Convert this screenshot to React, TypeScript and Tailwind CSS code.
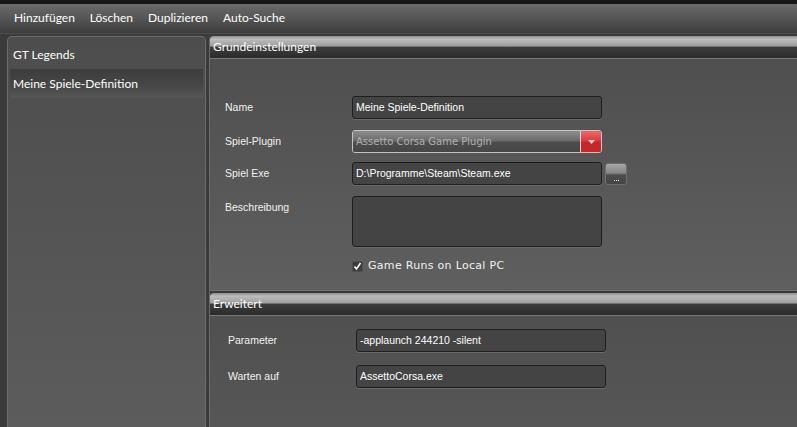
import React from "react";

const menuItems = ["Hinzufügen", "Löschen", "Duplizieren", "Auto-Suche"];
const games = ["GT Legends", "Meine Spiele-Definition"];

function SectionHeader({ title }: { title: string }) {
    return (
        <div className="h-[23px] shrink-0 flex items-center pl-[3px] rounded-tl-[4px] border-b border-[#7a7a7a] bg-[linear-gradient(to_bottom,#8c8c8c_0%,#bcbcbc_14%,#9e9e9e_46%,#3d3d3d_50%,#2b2b2b_100%)] text-white text-[12px] font-['Lato','Liberation_Sans',sans-serif]">
            {title}
        </div>
    );
}

function TextBox({ value, tall }: { value?: string; tall?: boolean }) {
    return (
        <div
            className={`w-[250px] ${tall ? "h-[51px] items-start pt-[4px]" : "h-[23px] items-center"} flex px-[3px] rounded-[3px] border border-[#1f1f1f] bg-[#444444] shadow-[0_1px_0_#6a6a6a] text-white text-[10.5px] font-['Liberation_Sans',Arial,sans-serif]`}
        >
            {value}
        </div>
    );
}

function Row({
    label,
    children,
    labelWidth,
}: {
    label: string;
    children: React.ReactNode;
    labelWidth: string;
}) {
    return (
        <div className="flex items-start">
            <div
                className={`${labelWidth} h-[23px] flex items-center text-[#f2f2f2] text-[10.5px] font-['Liberation_Sans',Arial,sans-serif]`}
            >
                {label}
            </div>
            {children}
        </div>
    );
}

function PluginSelect() {
    return (
        <div className="w-[250px] h-[23px] flex rounded-[3px] border border-[#c4c4c4] overflow-hidden">
            <div className="flex-1 flex items-center pl-[3px] bg-[linear-gradient(to_bottom,#8e8e8e_0%,#6c6c6c_45%,#4c4c4c_55%,#474747_100%)] text-[#b0b0b0] text-[10px] font-['DejaVu_Sans',Verdana,sans-serif]">
                Assetto Corsa Game Plugin
            </div>
            <div className="w-[21px] flex items-center justify-center border-l border-[#d8d8d8] bg-[linear-gradient(to_bottom,#ee6a6a_0%,#de3b3b_45%,#c92626_55%,#c42828_100%)]">
                <svg width="7" height="4" viewBox="0 0 7 4">
                    <path d="M0 0 H7 L3.5 4 Z" fill="#f4dede" />
                </svg>
            </div>
        </div>
    );
}

function BrowseButton() {
    return (
        <div className="ml-[3px] w-[22px] h-[22px] mt-[1px] flex items-end justify-center pb-[3px] rounded-[3px] border border-[#6e6e6e] bg-[linear-gradient(to_bottom,#a6a6a6_0%,#868686_45%,#4d4d4d_55%,#444444_100%)]">
            <div className="flex gap-[1px]">
                <span className="w-[1px] h-[1px] bg-white" />
                <span className="w-[1px] h-[1px] bg-white" />
                <span className="w-[1px] h-[1px] bg-white" />
            </div>
        </div>
    );
}

export default function App() {
    return (
        <div className="w-[797px] h-[427px] overflow-hidden flex flex-col bg-[#3b3b3b] select-none">
            {/* window top edge */}
            <div className="h-[4px] shrink-0 bg-[#161616]" />

            {/* menu bar */}
            <div className="h-[30px] shrink-0 flex items-start pt-[5px] pl-[14px] gap-[15px] bg-[linear-gradient(to_bottom,#6a6a6a_0%,#555555_50%,#3c3c3c_100%)] border-b border-[#4e4e4e] text-white text-[12px] font-['Lato','Liberation_Sans',sans-serif]">
                {menuItems.map((m) => (
                    <span key={m}>{m}</span>
                ))}
            </div>

            <div className="flex-1 flex pt-[2px] min-h-0">
                {/* game list */}
                <div className="ml-[7px] w-[199px] flex flex-col pt-[3px] rounded-t-[5px] border border-b-0 border-[#6c6c6c] bg-[linear-gradient(to_bottom,#4d4d4d_0%,#5c5c5c_100%)] text-white text-[12px] font-['Lato','Liberation_Sans',sans-serif]">
                    {games.map((g, i) => (
                        <div
                            key={g}
                            className={`mx-[2px] h-[29px] flex items-center pl-[3px] ${
                                i === 1
                                    ? "bg-[linear-gradient(to_bottom,#3d3d3d_0%,#474747_60%,#585858_100%)]"
                                    : ""
                            }`}
                        >
                            {g}
                        </div>
                    ))}
                </div>

                {/* settings */}
                <div className="ml-[3px] flex-1 flex flex-col min-w-0 border-l border-[#6a6a6a] rounded-tl-[4px]">
                    <SectionHeader title="Grundeinstellungen" />
                    <div className="h-[232px] shrink-0 flex flex-col pt-[37px] pl-[15px] bg-[linear-gradient(to_bottom,#4f4f4f_0%,#5f5f5f_100%)] border-b border-[#6e6e6e]">
                        <Row label="Name" labelWidth="w-[127px]">
                            <TextBox value="Meine Spiele-Definition" />
                        </Row>
                        <div className="mt-[11px]">
                            <Row label="Spiel-Plugin" labelWidth="w-[127px]">
                                <PluginSelect />
                            </Row>
                        </div>
                        <div className="mt-[9px]">
                            <Row label="Spiel Exe" labelWidth="w-[127px]">
                                <TextBox value="D:\Programme\Steam\Steam.exe" />
                                <BrowseButton />
                            </Row>
                        </div>
                        <div className="mt-[11px]">
                            <Row label="Beschreibung" labelWidth="w-[127px]">
                                <TextBox tall />
                            </Row>
                        </div>
                        <div className="mt-[11px] ml-[127px] flex items-center gap-[5px]">
                            <div className="w-[11px] h-[11px] flex items-center justify-center bg-[#3c3c3c] border border-[#505050]">
                                <svg width="9" height="9" viewBox="0 0 9 9">
                                    <path
                                        d="M1.5 4.5 L3.5 7 L7.5 1"
                                        stroke="#ffffff"
                                        strokeWidth="1.6"
                                        fill="none"
                                    />
                                </svg>
                            </div>
                            <span className="text-[#f0f0f0] text-[11px] tracking-[0.3px] font-['DejaVu_Sans',Verdana,sans-serif]">
                                Game Runs on Local PC
                            </span>
                        </div>
                    </div>
                    <div className="h-[2px] shrink-0 bg-[#3a3a3a]" />

                    <SectionHeader title="Erweitert" />
                    <div className="flex-1 flex flex-col pt-[13px] pl-[18px] gap-[13px] bg-[linear-gradient(to_bottom,#505050_0%,#565656_100%)]">
                        <Row label="Parameter" labelWidth="w-[128px]">
                            <TextBox value="-applaunch 244210 -silent" />
                        </Row>
                        <Row label="Warten auf" labelWidth="w-[128px]">
                            <TextBox value="AssettoCorsa.exe" />
                        </Row>
                    </div>
                </div>
            </div>
        </div>
    );
}
